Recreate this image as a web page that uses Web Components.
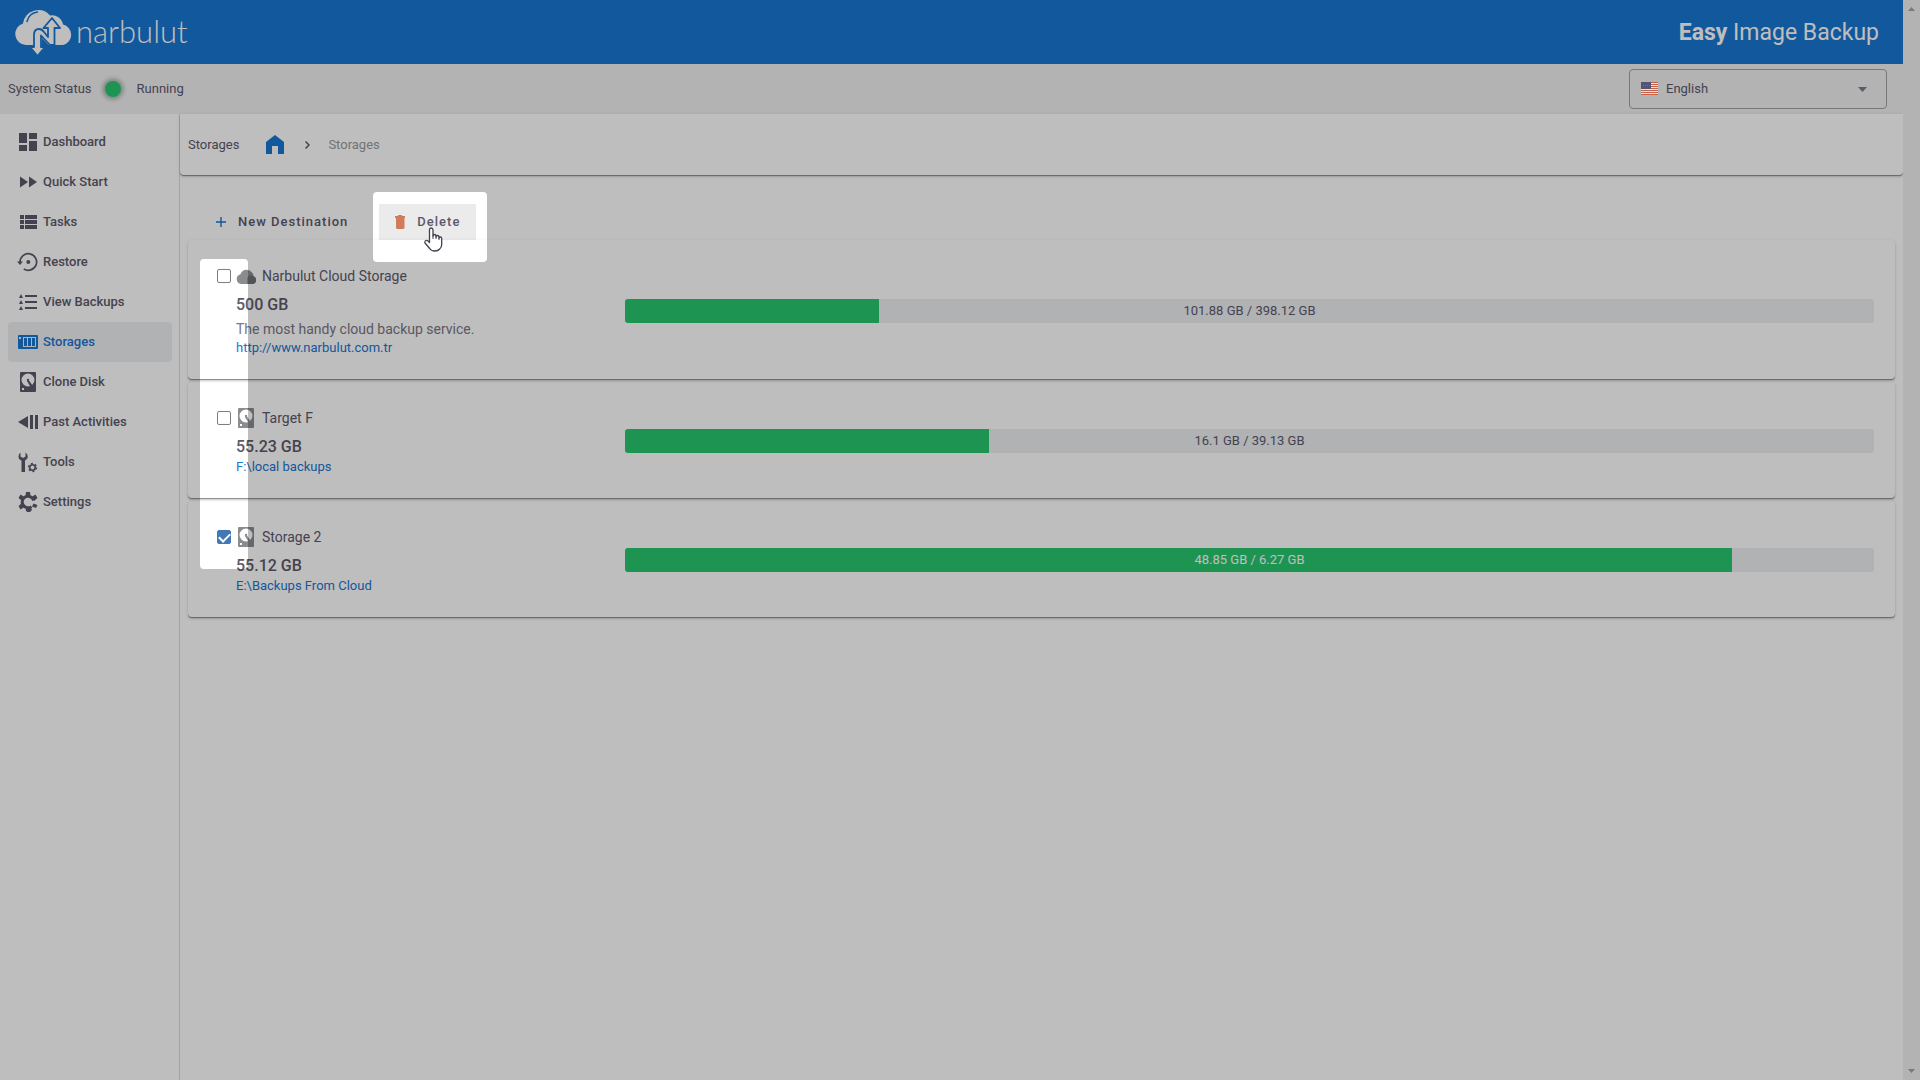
<!DOCTYPE html>
<html lang="en">
<head>
<meta charset="utf-8">
<title>Easy Image Backup - Storages</title>
<style>
    * { box-sizing: border-box; }

    body {
        margin: 0;
        background: #fff;
        color: #5d596c;
        font: 13px/20px Roboto, "Liberation Sans", sans-serif;
        --brand: #1976d2;
        --surface: #eceff1;
        --success: #28c76f;
        --muted: #9b9b9f;
    }
</style>
</head>
<body>

<app-shell>
    <app-header slot="header"></app-header>
    <status-bar slot="header">Running</status-bar>

    <side-nav slot="nav">
        <nav-item icon="dashboard">Dashboard</nav-item>
        <nav-item icon="quick">Quick Start</nav-item>
        <nav-item icon="tasks">Tasks</nav-item>
        <nav-item icon="restore">Restore</nav-item>
        <nav-item icon="list">View Backups</nav-item>
        <nav-item icon="storages" active>Storages</nav-item>
        <nav-item icon="disk">Clone Disk</nav-item>
        <nav-item icon="past">Past Activities</nav-item>
        <nav-item icon="tools">Tools</nav-item>
        <nav-item icon="settings">Settings</nav-item>
    </side-nav>

    <page-heading>Storages</page-heading>
    <tool-bar>
        <tool-button icon="plus">New Destination</tool-button>
        <tool-button icon="trash" hovered>Delete</tool-button>
    </tool-bar>
    <storage-list>
        <storage-card icon="cloud" name="Narbulut Cloud Storage" size="500 GB" link="http://www.narbulut.com.tr" used="101.88" free="398.12">The most handy cloud backup service.</storage-card>
        <storage-card icon="disk" name="Target F" size="55.23 GB" link="F:\local backups" used="16.1" free="39.13"></storage-card>
        <storage-card icon="disk" name="Storage 2" size="55.12 GB" link="E:\Backups From Cloud" used="48.85" free="6.27" checked></storage-card>
    </storage-list>
</app-shell>
<tour-overlay></tour-overlay>

<script>
const ICONS = {
    dashboard: `<path d="M1 1h8v10H1zM1 13h8v6H1zM11 1h8v6h-8zM11 9h8v10h-8z"/>`,
    quick: `<path d="M2 4.500v11l8-5.500zM11 4.500v11l8-5.500z"/>`,
    tasks: `<path d="M2 3h4v4H2zM7 3h12v4H7zM2 8h4v4H2zM7 8h12v4H7zM2 13h4v4H2zM7 13h12v4H7z"/>`,
    restore: `<path d="M2 10a8.300 8.300 0 1 1 3.700 6.900" fill="none" stroke="currentColor" stroke-width="1.700"/><path d="M-1 9.500h6L2 13z"/><circle cx="10.300" cy="10" r="2"/>`,
    list: `<path d="M3 2l2 4H1zM3 8l2 4H1zM3 14l2 4H1zM7 3h12v2H7zM7 9h12v2H7zM7 15h12v2H7z"/>`,
    storages: `<path fill-rule="evenodd" d="M1 3h18a1 1 0 0 1 1 1v12a1 1 0 0 1-1 1H1a1 1 0 0 1-1-1V4a1 1 0 0 1 1-1zM5 5v10h13V5zM1 5v2h2V5z"/><path d="M6 6h3v8H6zM10 6h3v8h-3zM14 6h3v8h-3z"/>`,
    disk: `<path fill-rule="evenodd" d="M3 0h14a1 1 0 0 1 1 1v18a1 1 0 0 1-1 1H3a1 1 0 0 1-1-1V1a1 1 0 0 1 1-1zM10 1.500a6.500 6.500 0 1 0 0 13 6.500 6.500 0 0 0 0-13zM4 16v2h2v-2z"/><path d="M9 9l2-.5 5 7-2 2z"/><circle cx="10" cy="8" r="1.200"/>`,
    past: `<path d="M0 10l10-6v12zM12 3h3v14h-3zM17 3h3v14h-3z"/>`,
    tools: `<path d="M2.500.500v4L5 6l2.500-1.500v-4Q10 2 9.800 5 9.500 7.500 7 8.500V20H3.500V8.500Q.500 7.500.500 4.500.500 2 2.500.500z"/><circle cx="14.500" cy="15.500" r="2.700" fill="none" stroke="currentColor" stroke-width="1.600"/><circle cx="14.500" cy="15.500" r="3.900" fill="none" stroke="currentColor" stroke-width="1.500" stroke-dasharray="2 2.080"/>`,
    settings: `<path d="M13.500 14.600A5.800 5.800 0 1 1 15.600 8.500" fill="none" stroke="currentColor" stroke-width="3"/><path d="M8 0h4l.5 4h-5zM.500 6l2-3.500L6.500 5 4 9zM19.500 6l-2-3.500L13.500 5 16 9zM.500 14l2 3.500 4-2.500L4 11zM19.500 13l-1.500 3-4-1.500 1.500-3zM9 16h4l1 2-2 2H9l-1.500-2z"/>`,
    cloud: `<path d="M5 18a5 5 0 0 1-.5-9.800A6.500 6.500 0 0 1 16 6.500a4.500 4.500 0 0 1 1.500 4A3.900 3.900 0 0 1 17 18z"/><path fill="#6d7073" d="M11 18V12a4 4 0 0 1 6-2 4 4 0 0 1 3 4 4 4 0 0 1-3 4z"/>`,
    plus: `<path fill="none" stroke="currentColor" stroke-width="1.400" d="M10 5v10M5 10h10"/>`,
    trash: `<path d="M8 3h4v1h3v2H5V4h3zM6 6h8.500v10l-1 1H7l-1-1z"/>`,
    home: `<path d="M10 0l9 7v12h-6v-8H7v8H1V7z"/>`
};

const icon = (name, size = 20) =>
    `<svg width="${size}" height="${size}" viewBox="0 0 20 20" fill="currentColor" overflow="visible" aria-hidden="true">${ICONS[name]}</svg>`;

const BASE = `* { box-sizing: border-box; } svg { display: block; flex: none; }`;

/** Common base: opens the shadow root and draws the template once. */
class BaseElement extends HTMLElement {
    constructor() {
        super();
        this.attachShadow({ mode: "open" });
    }

    connectedCallback() {
        this.shadowRoot.innerHTML = `<style>${BASE}${this.styles()}</style>${this.template()}`;
    }

    styles() { return ""; }
    template() { return "<slot></slot>"; }
}

class AppShell extends BaseElement {
    styles() {
        return `
            :host { display: grid; grid-template-columns: minmax(0, 1fr) 17px; min-height: 100vh; }
            .page { display: flex; flex-direction: column; }
            .body { flex: 1; display: grid; grid-template-columns: 180px minmax(0, 1fr); }
            .rail {
                display: flex;
                flex-direction: column;
                justify-content: space-between;
                align-items: center;
                padding: 7px 0;
                background: #f0f0f0;
                color: #a3a3a3;
            }
        `;
    }

    template() {
        return `
            <div class="page">
                <slot name="header"></slot>
                <div class="body">
                    <slot name="nav"></slot>
                    <main><slot></slot></main>
                </div>
            </div>
            <div class="rail" aria-hidden="true">
                <svg width="7" height="4" viewBox="0 0 7 4" fill="currentColor"><path d="M0 4l3.500-4L7 4z"/></svg>
                <svg width="7" height="4" viewBox="0 0 7 4" fill="currentColor"><path d="M0 0l3.500 4L7 0z"/></svg>
            </div>
        `;
    }
}

class AppHeader extends BaseElement {
    styles() {
        return `
            :host {
                display: flex;
                align-items: center;
                justify-content: space-between;
                height: 64px;
                padding: 0 24px 0 16px;
                background: var(--brand);
                color: #fff;
            }
            .logo { display: flex; align-items: center; color: inherit; text-decoration: none; }
            .logo span { font: 300 31px/40px Lato, sans-serif; padding: 0 0 2px 2px; }
            .title { padding-top: 2px; font-size: 23px; line-height: 32px; }
            .title b { font-weight: 700; }
        `;
    }

    template() {
        return `
            <a class="logo" href="#">
                <svg width="58" height="48" viewBox="0 0 58 48" overflow="visible">
                    <path fill="#fff" d="M10 37A11 11 0 0 1 7 15.500 15.500 15.500 0 0 1 34 7.500a11 11 0 0 1 13 9A10.500 10.500 0 0 1 47 37z"/>
                    <path fill="none" stroke="var(--brand)" stroke-width="1.500" stroke-linecap="round" d="M11 13.500Q13 5 21.500 4"/>
                    <path fill="#fff" stroke="var(--brand)" stroke-width="1.800" stroke-linejoin="round" d="M18 39V27q0-6 5-6 3 0 5 3l4 5V20h-4.500L36 10l8 10h-5.500v17H34l-9-9.500V39h4l-7.500 9L14 39z"/>
                    <path fill="var(--brand)" d="M26 30l7 7.500h-7z"/>
                </svg>
                <span>narbulut</span>
            </a>
            <div class="title"><b>Easy</b> Image Backup</div>
        `;
    }
}

class StatusBar extends BaseElement {
    styles() {
        return `
            :host {
                display: flex;
                align-items: center;
                gap: 16px;
                height: 50px;
                padding: 0 16px 0 8px;
                background: #f0f0f0;
            }
            .dot {
                width: 16px;
                height: 16px;
                margin: 0 -2px 0 -3px;
                border-radius: 50%;
                background: var(--success);
                box-shadow: 0 0 0 2px #bcc6c1, 0 0 3px 4px #d0d2d2;
            }
            .state { padding-left: 2px; }
            .language { display: grid; align-items: center; width: 258px; margin-left: auto; }
            .language > * { grid-area: 1 / 1; }
            .flag { margin-left: 12px; }
            .caret { justify-self: end; margin-right: 20px; }
            svg { pointer-events: none; z-index: 1; }
            select {
                appearance: none;
                width: 100%;
                height: 40px;
                padding: 0 36px;
                border: 1px solid #9fa2a4;
                border-radius: 4px;
                background: transparent;
                color: inherit;
                font: inherit;
            }
        `;
    }

    template() {
        return `
            <span>System Status</span>
            <span class="dot"></span>
            <span class="state"><slot></slot></span>
            <div class="language">
                <svg class="flag" width="17" height="14" viewBox="0 0 17 14">
                    <path fill="#e6e0de" d="M0 0h17v13H0z"/>
                    <path fill="#c4624a" d="M0 0h17v1H0zM0 2h17v1H0zM0 4h17v1H0zM0 6h17v1H0zM0 8h17v1H0zM0 10h17v1H0zM0 12h17v1H0z"/>
                    <path fill="#4f5478" d="M0 0h10v7H0z"/>
                    <path stroke="#3f78c8" stroke-dasharray="1 1" d="M2 3.500h7"/>
                </svg>
                <select aria-label="Language"><option>English</option><option>Türkçe</option></select>
                <svg class="caret" width="9" height="6" viewBox="0 0 9 6" fill="currentColor"><path d="M0 1h9L4.500 6z"/></svg>
            </div>
        `;
    }
}

class SideNav extends BaseElement {
    styles() {
        return `
            :host { display: block; padding: 8px 7px 8px 8px; border-right: 1px solid #dcdcdc; }
            nav { display: flex; flex-direction: column; }
        `;
    }

    template() { return `<nav><slot></slot></nav>`; }
}

class NavItem extends BaseElement {
    styles() {
        return `
            :host { display: block; }
            a {
                display: flex;
                align-items: center;
                gap: 5px;
                height: 40px;
                padding: 0 10px;
                border-radius: 4px;
                color: inherit;
                font-weight: 500;
                text-decoration: none;
            }
            :host([active]) a { background: var(--surface); color: var(--brand); }
        `;
    }

    template() {
        return `<a href="#">${icon(this.getAttribute("icon"))}<span><slot></slot></span></a>`;
    }
}

const CARD_SHADOW = `0 1px 0 rgba(0,0,0,.3), 0 2px 2px rgba(0,0,0,.14), 0 1px 4px rgba(0,0,0,.1)`;

class PageHeading extends BaseElement {
    styles() {
        return `
            :host {
                display: flex;
                align-items: center;
                gap: 18px;
                height: 61px;
                padding: 0 8px;
                border-radius: 0 0 4px 4px;
                box-shadow: ${CARD_SHADOW};
            }
            h1 { margin: 0; padding-right: 8px; font: inherit; }
            .home { padding-right: 2px; color: var(--brand); }
            .current { color: var(--muted); }
        `;
    }

    template() {
        return `
            <h1><slot></slot></h1>
            <a class="home" href="#" aria-label="Home">${icon("home")}</a>
            <svg width="5" height="8" viewBox="0 0 5 8" fill="none" stroke="currentColor" stroke-width="1.500"><path d="M.500.500L4 4 .500 7.500"/></svg>
            <span class="current">Storages</span>
        `;
    }
}

class ToolBar extends BaseElement {
    styles() {
        return `:host { display: flex; gap: 15px; padding: 29px 20px 0; }`;
    }
}

class ToolButton extends BaseElement {
    styles() {
        return `
            :host { display: block; }
            button {
                display: flex;
                align-items: center;
                gap: 7px;
                height: 36px;
                padding: 0 16px 0 11px;
                border: 0;
                background: none;
                color: inherit;
                font: 500 13px/20px Roboto, sans-serif;
                letter-spacing: 1px;
                cursor: pointer;
            }
            svg { color: var(--brand); }
            :host([hovered]) button { background: #ebebeb; }
            :host([icon="trash"]) svg { color: #d07c5b; }
        `;
    }

    template() {
        return `<button type="button">${icon(this.getAttribute("icon"))}<span><slot></slot></span></button>`;
    }
}

class StorageList extends BaseElement {
    styles() {
        return `:host { display: flex; flex-direction: column; gap: 3px; padding: 0 8px; }`;
    }
}

/** One storage with its tick box, its details and how full it is. */
class StorageCard extends BaseElement {
    styles() {
        return `
            :host {
                display: grid;
                grid-template-columns: 400px minmax(0, 1fr);
                align-items: center;
                gap: 8px;
                padding: 24px 21px 22px 29px;
                border-radius: 4px;
                box-shadow: ${CARD_SHADOW};
            }
            .head { display: flex; align-items: center; height: 24px; font-size: 14px; }
            .head svg { margin: 0 6px 0 5px; color: #8a8d90; }
            input {
                appearance: none;
                display: grid;
                place-items: center;
                width: 14px;
                height: 14px;
                margin: 0;
                border: 1px solid #7d7d80;
                border-radius: 2px;
            }
            input:checked { border-color: #4178b5; background: #4178b5; }
            input:checked::after {
                content: "";
                width: 5px;
                height: 9px;
                margin-bottom: 2px;
                border: solid #fff;
                border-width: 0 2px 2px 0;
                transform: rotate(45deg);
            }
            .info { padding-left: 19px; }
            .size { padding-top: 7px; font-size: 16px; line-height: 20px; font-weight: 500; }
            .about { padding-top: 5px; font-size: 14px; line-height: 18px; color: #7a7784; }
            a { display: block; line-height: 19px; color: var(--brand); text-decoration: none; }
            .bar {
                display: grid;
                height: 24px;
                border-radius: 3px;
                background: var(--surface);
                overflow: hidden;
            }
            .bar > * { grid-area: 1 / 1; }
            .fill { background: var(--success); }
            .amount { text-align: center; line-height: 24px; }
            .amount.light { color: #fff; }
        `;
    }

    template() {
        const get = name => this.getAttribute(name);
        const used = Number(get("used"));
        const free = Number(get("free"));
        const percent = used / (used + free) * 100;
        const about = this.textContent.trim() ? `<div class="about"><slot></slot></div>` : "";

        return `
            <div>
                <div class="head">
                    <input type="checkbox" id="pick" ${this.hasAttribute("checked") ? "checked" : ""}>
                    ${icon(get("icon"))}
                    <label for="pick">${get("name")}</label>
                </div>
                <div class="info">
                    <div class="size">${get("size")}</div>
                    ${about}
                    <a href="#">${get("link")}</a>
                </div>
            </div>
            <div class="bar" role="progressbar" aria-valuenow="${Math.round(percent)}" aria-label="Used space">
                <div class="fill" style="width: ${percent}%"></div>
                <div class="amount ${percent > 50 ? "light" : ""}">${used} GB / ${free} GB</div>
            </div>
        `;
    }
}

/** Dims the page, leaving the tick boxes and the Delete button lit. */
class TourOverlay extends BaseElement {
    styles() {
        return `
            :host { position: fixed; inset: 0; pointer-events: none; }
            .shade { width: 100%; height: 100%; }
            .hand { position: absolute; left: 424px; top: 227px; }
        `;
    }

    template() {
        return `
            <svg class="shade">
                <mask id="lit">
                    <rect width="100%" height="100%" fill="#fff"/>
                    <rect x="200" y="259" width="48" height="310" rx="4"/>
                    <rect x="373" y="192" width="114" height="70" rx="4"/>
                </mask>
                <rect width="100%" height="100%" fill="#000" fill-opacity=".255" mask="url(#lit)"/>
            </svg>
            <svg class="hand" width="19" height="25" viewBox="0 0 19 25">
                <path fill="#fff" stroke="#44404c" stroke-width="1.300" stroke-linejoin="round" d="M5.500 14V3q0-2 1.700-2T9 3v6q0-1.500 1.500-1.500T12 9v1q0-1.500 1.500-1.500T15 10v1q0-1 1.300-1t1.400 1.500v6q0 3-2 4.500-1.500 2-5 2t-5-2.500L1 16q-.500-2 1-2.500 1.500-.500 3.500 2z"/>
                <path stroke="#44404c" d="M9 8v4M12 9v3M15 10v3"/>
            </svg>
        `;
    }
}

customElements.define("app-shell", AppShell);
customElements.define("app-header", AppHeader);
customElements.define("status-bar", StatusBar);
customElements.define("side-nav", SideNav);
customElements.define("nav-item", NavItem);
customElements.define("page-heading", PageHeading);
customElements.define("tool-bar", ToolBar);
customElements.define("tool-button", ToolButton);
customElements.define("storage-list", StorageList);
customElements.define("storage-card", StorageCard);
customElements.define("tour-overlay", TourOverlay);
</script>
</body>
</html>
